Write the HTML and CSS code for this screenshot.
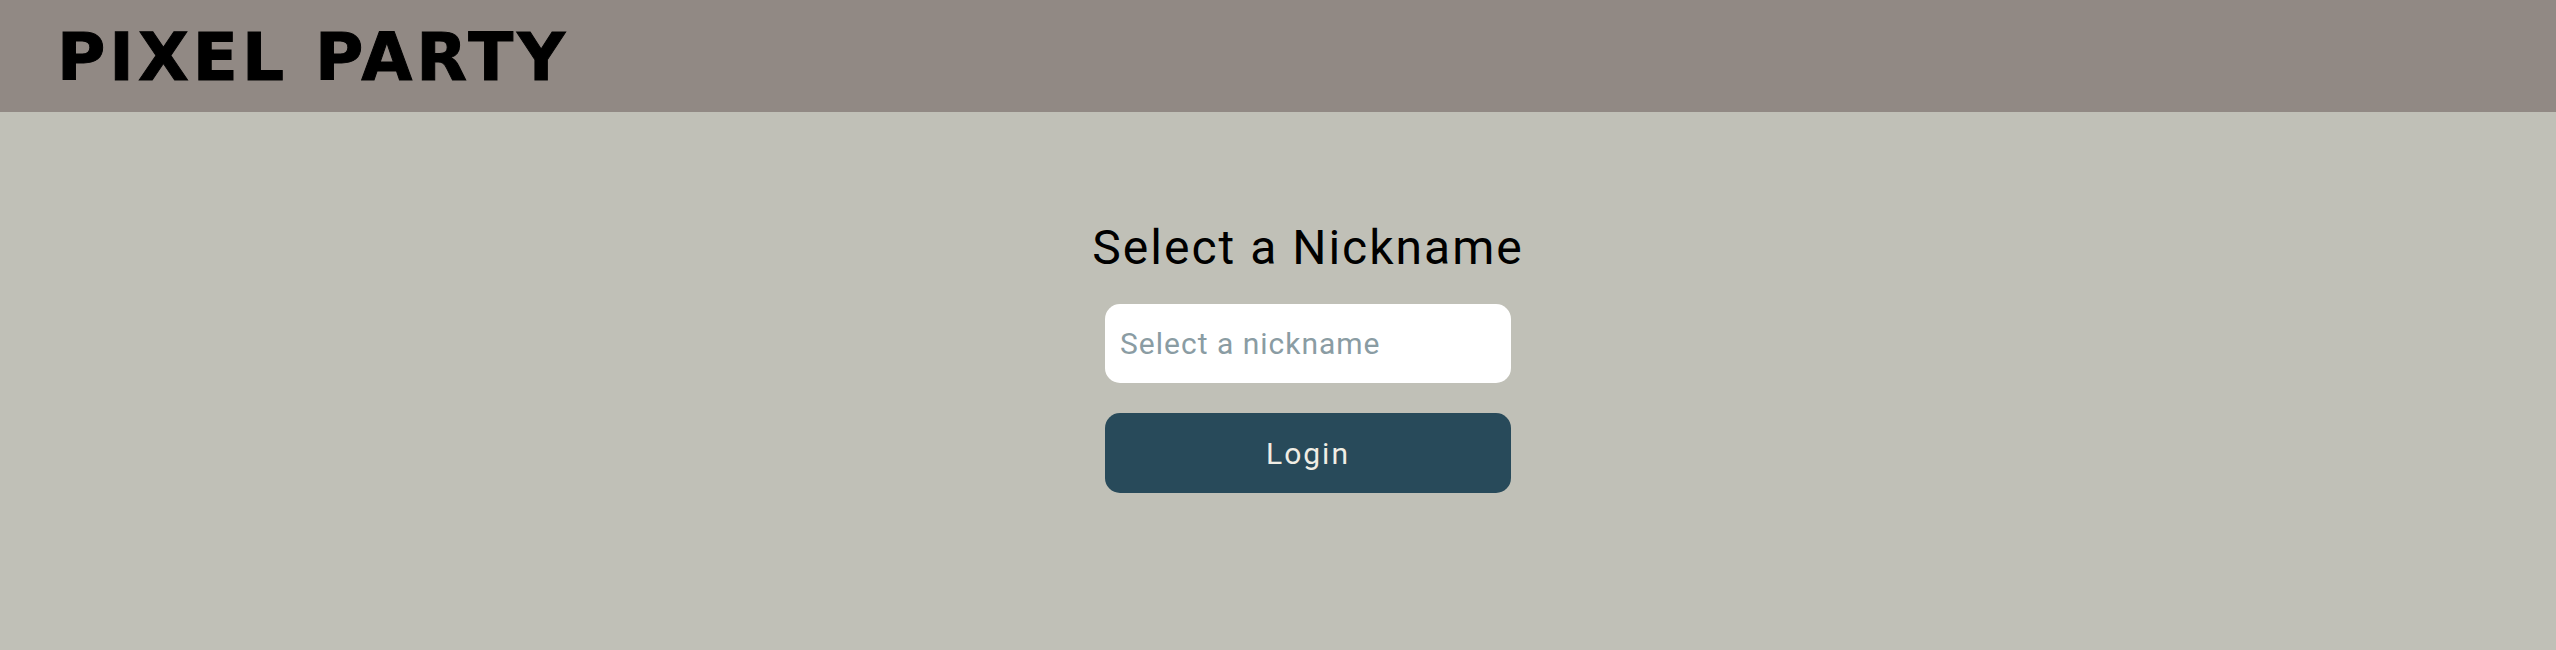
FILE: index.html
```html
<!DOCTYPE html>
<html>
<head>
<meta charset="utf-8">
<link rel="stylesheet" href="styles.css">
</head>
<body>
<header class="topbar">
  <h1 class="brand">PIXEL PARTY</h1>
</header>
<main class="main">
  <section class="login">
    <h2 class="login-title">Select a Nickname</h2>
    <input class="nick-input" type="text" placeholder="Select a nickname">
    <button class="login-btn">Login</button>
  </section>
</main>
</body>
</html>
```

FILE: styles.css
```css
html, body {
  margin: 0;
  padding: 0;
  height: 100%;
}
body {
  background: #c0c0b7;
  font-family: Roboto, "Noto Sans", sans-serif;
}
.topbar {
  height: 112px;
  background: #918984;
  display: flex;
  align-items: flex-start;
  padding: 25px 0 0 57px;
  box-sizing: border-box;
}
.brand {
  margin: 0;
  font-family: "DejaVu Sans", Verdana, sans-serif;
  font-weight: bold;
  font-size: 66px;
  letter-spacing: 4px;
  color: #000;
  line-height: 66px;
  -webkit-text-stroke: 1px #000;
}
.main {
  display: flex;
  justify-content: center;
  padding-left: 60px;
  padding-top: 106px;
}
.login {
  display: flex;
  flex-direction: column;
  align-items: center;
  width: 406px;
}
.login-title {
  margin: 0 0 26px;
  font-size: 48px;
  font-weight: 400;
  letter-spacing: 2px;
  color: #000;
  white-space: nowrap;
  line-height: 60px;
}
.nick-input {
  width: 406px;
  height: 79px;
  box-sizing: border-box;
  border: none;
  border-radius: 15px;
  background: #fff;
  padding: 0 15px;
  font-family: Roboto, sans-serif;
  font-size: 30px;
  letter-spacing: 1px;
  outline: none;
}
.nick-input::placeholder {
  color: #8a9ca3;
}
.login-btn {
  margin-top: 30px;
  width: 406px;
  height: 80px;
  border: none;
  border-radius: 15px;
  background: #284a5a;
  color: #f0ede4;
  font-family: Roboto, sans-serif;
  font-size: 30px;
  letter-spacing: 2px;
}
```
